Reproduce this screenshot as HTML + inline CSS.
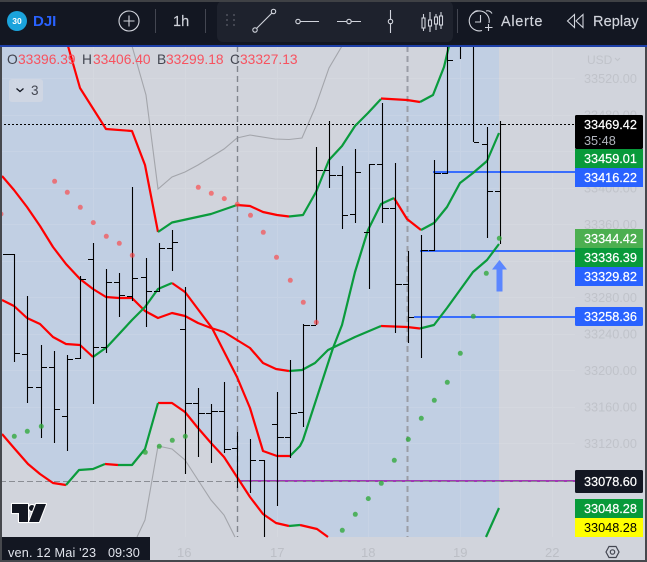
<!DOCTYPE html>
<html><head><meta charset="utf-8"><style>
html,body{margin:0;padding:0;background:#d1d4dc;width:647px;height:562px;overflow:hidden}
svg{display:block}
text{font-family:"Liberation Sans",sans-serif}
.l{font-size:12.7px;fill:#fff;stroke:#fff;stroke-width:.2}
.a{font-size:12.7px;fill:#c0c3ca}
.h{font-size:13.8px;fill:#f7525f}
.k{font-size:13.8px;fill:#434651}
.t{font-size:14.5px;fill:#d1d4dc;stroke:#d1d4dc;stroke-width:.15}
.x{font-size:13px;fill:#bcbfc6}
</style></head><body>
<svg width="647" height="562" viewBox="0 0 647 562" xmlns="http://www.w3.org/2000/svg">
<rect width="647" height="562" fill="#d1d4dc"/>
<!-- blue fill -->
<polygon fill="#c1cfe3" points="0,46 68,46 80,88 106,129 132,131 145,165 158,232 172,222.5 211,214 237,205 250,206 263,212 277,215 289,216.5 303,215 316,192 329,160 342,146 355,126 368,113 381,99 407,100 420,102 433,95 444,67 449,46 499,46 499,508 486,537 328,537 317,529 300,525 289,526 276,523 263,514 250,497 237,477 224,457 211,443 198,428 185,412 172,403 158,403 145,449 132,465 118,465 105,464 93,469 79,470 66,485 53,483 28,464 14,448 2,434 0,432"/>
<!-- grid -->
<g stroke="#fff" stroke-opacity=".1" stroke-width="1">
<path d="M93.5 46V537M185.5 46V537M277.5 46V537M368.5 46V537M460.5 46V537M552.5 46V537M0 78.5H575M0 115.5H575M0 151.5H575M0 188.5H575M0 224.5H575M0 261.5H575M0 297.5H575M0 334.5H575M0 370.5H575M0 407.5H575M0 443.5H575"/>
</g>
<!-- thin gray lines -->
<g fill="none" stroke="#a3a5ab" stroke-width="1.1">
<polyline points="132,46 146,95 158,189 172,177 185,172 198,165 224,149 237,138 250,135 275,139 289,139.5 302,138 315,108 329,68 342,46"/>
<polyline points="137,537 145,520 158,446 172,449 185,460 198,480 211,500 224,515 235,537"/>
</g>
<!-- dashed verticals -->
<g stroke="#82858d" stroke-width="1.4" stroke-dasharray="6 4" fill="none">
<path d="M237.5 46V537"/>
<path d="M407.5 46V537" stroke="#9a9da6" stroke-width="2"/>
</g>
<!-- horizontals -->
<path d="M0 124.5H575" stroke="#000" stroke-width="1" stroke-dasharray="2 2"/>
<path d="M238 481H575" stroke="#9c27b0" stroke-width="2" stroke-opacity=".9"/>
<path d="M0 481.5H575" stroke="#8a8d94" stroke-width="1" stroke-dasharray="6 3"/>
<g stroke="#2962ff" stroke-width="2" stroke-opacity=".9">
<path d="M433 172H575"/><path d="M420 251H575"/><path d="M414 317H575"/>
</g>
<!-- bands -->
<g fill="none" stroke-width="2.2" stroke-linejoin="round" stroke="#f00">
<polyline points="68,46 80,88 106,129 132,131 145,165 158,232"/>
<polyline points="237,205 250,206 263,212 277,215 289,216.5"/>
<polyline points="381,98.5 407,100 420,102"/>
<polyline points="2,176 14,190 27,207 40,226 53,247 66,264 80,279 93,289 106,297 119,298 132,298 145,311 158,318 172,313 185,316 198,323 211,328 224,332 237,340 250,348 263,363 276,369 289,371"/>
<polyline points="381,326 407,327 420,328.5"/>
<polyline points="2,300 14,306 27,318 40,324 53,337 66,344 80,345 93,357"/>
<polyline points="172,283 185,292 212,328 237,377 250,408 263,451 277,456 290,456"/>
<polyline points="394,198 407,219 421,230"/>
<polyline points="2,434 14,448 28,464 40,474 53,483 66,485"/>
<polyline points="105,464 118,465"/>
<polyline points="158,403 172,403 185,412 198,428 211,443 224,457 237,477 250,497 263,514 276,523 289,526"/>
<polyline points="300,525 317,529 328,537"/>
</g>
<g fill="none" stroke-width="2.2" stroke-linejoin="round" stroke="#0a9b3c">
<polyline points="158,232 172,222.5 211,214 237,205"/>
<polyline points="289,216.5 303,215 316,192 329,160 342,146 355,126 368,113 381,99"/>
<polyline points="420,102 433,95 444,67 449,46"/>
<polyline points="289,371 302,370 315,363 328,350 355,337 381,326"/>
<polyline points="420,328.5 434,325 447,308 460,290 473,272 487,260 499,244"/>
<polyline points="93,357 107,347 132,320 145,307 158,289 172,283"/>
<polyline points="290,456 300,446 303,440 333,348 342,325 355,272 368,230 381,204 394,198"/>
<polyline points="421,230 434,223 447,207 460,183 473,173 487,161 499,133"/>
<polyline points="66,485 79,470 93,469 105,464"/>
<polyline points="118,465 132,465 145,449 158,403"/>
<polyline points="289,526 300,525"/>
<polyline points="486,537 499,508"/>
</g>
<!-- bars -->
<path fill="none" stroke="#000" stroke-width="1.1" d="
M14.5 254V362M3 254.5H14M15 353.5H20
M27.5 296V403M22 354.5H27M28 387.5H33
M41.5 345V438M36 387.5H41M42 367.5H47
M54.5 351V443M49 367.5H54M55 409.5H60
M67.5 355V451M62 416.5H67M68 359.5H73
M80.5 276V359M75 358.5H80M81 279.5H86
M93.5 243V404M88 259.5H93M94 347.5H99
M106.5 269V353M101 347.5H106M107 282.5H112
M119.5 273V317M114 282.5H119M120 295.5H125
M132.5 187V301M127 296.5H132M133 278.5H138
M146.5 258V327M141 277.5H146M147 291.5H152
M159.5 243V292M154 291.5H159M160 248.5H165
M172.5 230V271M167 248.5H172M173 242.5H178
M185.5 287V474M180 329.5H185M186 403.5H192
M198.5 388V457M193 403.5H198M199 413.5H205
M211.5 404V463M206 413.5H211M212 411.5H218
M224.5 382V453M219 411.5H224M225 449.5H231
M237.5 432V488M232 448.5H237
M250.5 439V493M251 460.5H256
M264.5 460V537M259 460.5H264
M277.5 392V506M272 424.5H277M278 437.5H284
M290.5 360V458M285 437.5H290M291 413.5H297
M303.5 324V427M298 412.5H303M304 325.5H310
M316.5 147V325M311 325.5H316M317 170.5H323
M329.5 121V188M324 170.5H329M330 175.5H336
M342.5 166V229M337 175.5H342M343 215.5H348
M355.5 149V223M350 214.5H355M356 172.5H361
M369.5 164V289M364 232.5H369M370 164.5H375
M382.5 103V223M377 164.5H382M383 208.5H389
M395.5 163V333M390 208.5H395M396 284.5H402
M408.5 251V343M403 284.5H408M409 317.5H414
M421.5 235V358M422 250.5H428
M434.5 160V251M429 250.5H434M435 173.5H441
M447.5 46V174M442 173.5H447M448 60.5H453
M460.5 46V59
M473.5 46V142M474 142.5H479
M487.5 127V238M482 144.5H487M488 191.5H493
M500.5 121V244M495 191.5H500M501 124.5H506"/>
<!-- dots -->
<g fill="#ff3b3b" fill-opacity=".62">
<circle cx="1" cy="214" r="2.5"/><circle cx="54.6" cy="181.3" r="2.5"/><circle cx="67.3" cy="192.3" r="2.5"/><circle cx="80.3" cy="207.3" r="2.5"/><circle cx="93.3" cy="222.6" r="2.5"/><circle cx="106.3" cy="236.3" r="2.5"/><circle cx="119.3" cy="243.3" r="2.5"/><circle cx="132.3" cy="255.3" r="2.5"/><circle cx="198.3" cy="187.3" r="2.5"/><circle cx="211.3" cy="193.3" r="2.5"/><circle cx="224.3" cy="198.6" r="2.5"/><circle cx="237.3" cy="204.3" r="2.5"/><circle cx="250.5" cy="215.3" r="2.5"/><circle cx="263.3" cy="232.3" r="2.5"/><circle cx="276.5" cy="257.3" r="2.5"/><circle cx="290.3" cy="280.3" r="2.5"/><circle cx="303.3" cy="302.3" r="2.5"/><circle cx="316.3" cy="322.3" r="2.5"/>
</g>
<g fill="#2fa83a" fill-opacity=".78">
<circle cx="14.3" cy="436.3" r="2.5"/><circle cx="27.3" cy="431.3" r="2.5"/><circle cx="41.3" cy="426.3" r="2.5"/><circle cx="145.3" cy="452.3" r="2.5"/><circle cx="159.3" cy="446.3" r="2.5"/><circle cx="172.3" cy="440.3" r="2.5"/><circle cx="185.3" cy="436.3" r="2.5"/><circle cx="342.3" cy="530.3" r="2.5"/><circle cx="355.3" cy="514.3" r="2.5"/><circle cx="368.3" cy="498.6" r="2.5"/><circle cx="381.3" cy="483.3" r="2.5"/><circle cx="394.3" cy="460.3" r="2.5"/><circle cx="408.3" cy="439.3" r="2.5"/><circle cx="421.3" cy="418.3" r="2.5"/><circle cx="434.3" cy="400.3" r="2.5"/><circle cx="447.3" cy="382.3" r="2.5"/><circle cx="460.3" cy="353.3" r="2.5"/><circle cx="473.3" cy="316.3" r="2.5"/><circle cx="486.3" cy="273.3" r="2.5"/><circle cx="499.3" cy="238.3" r="2.5"/>
</g>
<!-- arrow -->
<path d="M499.5 260L507 269.5H502.5V291.5H496.5V269.5H492Z" fill="#5b86ff"/>
<!-- TV logo -->
<g fill="#131722" stroke="#fff" stroke-width="2.2" paint-order="stroke" stroke-linejoin="round">
<path d="M12 504H28V522H19V513H12Z"/><circle cx="32" cy="508" r="3"/><path d="M36 504H46L39 522H29Z"/>
</g>
<!-- legend -->
<text class="k" x="7" y="64">O</text><text class="h" x="18" y="64">33396.39</text>
<text class="k" x="82" y="64">H</text><text class="h" x="93" y="64">33406.40</text>
<text class="k" x="157" y="64">B</text><text class="h" x="166" y="64">33299.18</text>
<text class="k" x="230" y="64">C</text><text class="h" x="240" y="64">33327.13</text>
<rect x="9" y="79" width="34" height="23" rx="3" fill="#dadde3" fill-opacity=".55"/>
<path d="M16.5 88.5L20 91.5L23.5 88.5" fill="none" stroke="#131722" stroke-width="1.3"/>
<text x="31" y="95" fill="#434651" style="font-size:13.5px">3</text>
<!-- price axis text -->
<text class="a" x="587" y="64" style="font-size:12px">USD</text>
<path d="M615 58L617.5 60.5L620 58" fill="none" stroke="#c0c3ca" stroke-width="1"/>
<text class="a" x="584" y="83">33520.00</text>
<text class="a" x="584" y="119.5">33480.00</text>
<text class="a" x="584" y="192.5">33400.00</text>
<text class="a" x="584" y="229">33360.00</text>
<text class="a" x="584" y="302">33280.00</text>
<text class="a" x="584" y="338.5">33240.00</text>
<text class="a" x="584" y="375">33200.00</text>
<text class="a" x="584" y="411.5">33160.00</text>
<text class="a" x="584" y="448">33120.00</text>
<!-- price labels -->
<rect x="575" y="115" width="68" height="34" rx="1.5" fill="#000"/>
<rect x="575" y="149" width="68" height="19" fill="#089a3a"/>
<rect x="575" y="168" width="68" height="19" fill="#2962ff"/>
<rect x="575" y="229" width="68" height="19" fill="#4caf50"/>
<rect x="575" y="248" width="68" height="19" fill="#089a3a"/>
<rect x="575" y="267" width="68" height="19" fill="#2962ff"/>
<rect x="575" y="307" width="68" height="19" rx="1.5" fill="#2962ff"/>
<rect x="575" y="470" width="68" height="23" rx="1.5" fill="#131722"/>
<rect x="575" y="499" width="68" height="19" fill="#089a3a"/>
<rect x="575" y="518" width="68" height="19" fill="#ffff00"/>
<text class="l" x="584" y="129">33469.42</text>
<text class="l" x="584" y="145" style="fill:#b2b5be;stroke:none">35:48</text>
<text class="l" x="584" y="163">33459.01</text>
<text class="l" x="584" y="182">33416.22</text>
<text class="l" x="584" y="243">33344.42</text>
<text class="l" x="584" y="262">33336.39</text>
<text class="l" x="584" y="281">33329.82</text>
<text class="l" x="584" y="321">33258.36</text>
<text class="l" x="584" y="486">33078.60</text>
<text class="l" x="584" y="513">33048.28</text>
<text class="l" x="584" y="532" style="fill:#000;stroke:none">33048.28</text>
<!-- time axis -->
<rect x="2" y="537" width="148" height="23" fill="#131722"/>
<text x="8" y="557" fill="#e0e3eb" style="font-size:12.7px;letter-spacing:.17px">ven. 12 Mai '23</text>
<text x="108" y="557" fill="#e0e3eb" style="font-size:12.7px">09:30</text>
<text class="x" x="177" y="557">16</text><text class="x" x="270" y="557">17</text><text class="x" x="361" y="557">18</text><text class="x" x="453" y="557">19</text><text class="x" x="545" y="557">22</text>
<path d="M606 552L609 546.5H616L619 552L616 557.5H609Z" fill="none" stroke="#434651" stroke-width="1.2"/>
<circle cx="612.5" cy="552" r="2.2" fill="none" stroke="#434651" stroke-width="1.2"/>
<!-- top toolbar -->
<rect x="0" y="0" width="647" height="45" fill="#131722"/>
<rect x="0" y="45" width="647" height="2" fill="#1d3fa8"/>
<rect x="217" y="1" width="236" height="41" rx="6" fill="#1e222d"/>
<circle cx="17" cy="21" r="10" fill="#1ba3dc"/>
<text x="17" y="24" text-anchor="middle" fill="#fff" style="font-size:8.5px;font-weight:bold">30</text>
<text x="33" y="26" fill="#2962ff" style="font-size:15px;font-weight:bold">DJI</text>
<circle cx="129" cy="21" r="10" fill="none" stroke="#d1d4dc" stroke-width="1.1"/>
<path d="M129 15.5V26.5M123.5 21H134.5" stroke="#d1d4dc" stroke-width="1.1"/>
<path d="M155.5 9V33M205.5 9V33M457.5 9V33" stroke="#434651" stroke-width="1"/>
<text class="t" x="173" y="26">1h</text>
<g fill="#434651"><rect x="226" y="14" width="2" height="2"/><rect x="233" y="14" width="2" height="2"/><rect x="226" y="19" width="2" height="2"/><rect x="233" y="19" width="2" height="2"/><rect x="226" y="24" width="2" height="2"/><rect x="233" y="24" width="2" height="2"/></g>
<g fill="none" stroke="#d1d4dc" stroke-width="1.1">
<circle cx="255" cy="30" r="2.2"/><circle cx="273.5" cy="11.5" r="2.2"/><path d="M256.6 28.4L272 13"/>
<circle cx="298" cy="21.5" r="2.2"/><path d="M300.2 21.5H319"/>
<circle cx="349" cy="21.5" r="2.2"/><path d="M337 21.5H346.8M351.2 21.5H361"/>
<circle cx="390.5" cy="21.5" r="2.2"/><path d="M390.5 10V19.3M390.5 23.7V33"/>
<rect x="422" y="18" width="3" height="10"/><path d="M423.5 14V18M423.5 28V31"/>
<rect x="428.5" y="20" width="3" height="6"/><path d="M430 12V20M430 26V32"/>
<rect x="434.5" y="17" width="3" height="7"/><path d="M436 14V17M436 24V30"/>
<rect x="439.5" y="16" width="3" height="9"/><path d="M441 12V16M441 25V29"/>
<!-- alarm -->
<path d="M489 23A10 10 0 1 0 482 30.5"/><path d="M480.5 15V22H475"/><path d="M473 13.5A5 5 0 0 1 479 11M486 11A5 5 0 0 1 492 13.5"/><path d="M488.5 24V31M485 27.5H492.5"/>
<!-- rewind -->
<path d="M574.5 14.5L567.5 21L574.5 27.5ZM583 14.5L576 21L583 27.5Z"/>
</g>
<text class="t" x="501" y="26" style="font-size:14.5px;letter-spacing:.7px">Alerte</text>
<text class="t" x="593" y="26" style="font-size:14.5px;letter-spacing:.1px">Replay</text>
<!-- window edges -->
<path d="M0 1H647" stroke="#3f4145" stroke-width="2"/>
<path d="M1 47V562M646 47V562M0 561H647" stroke="#46484d" stroke-width="2"/>
</svg>
</body></html>
